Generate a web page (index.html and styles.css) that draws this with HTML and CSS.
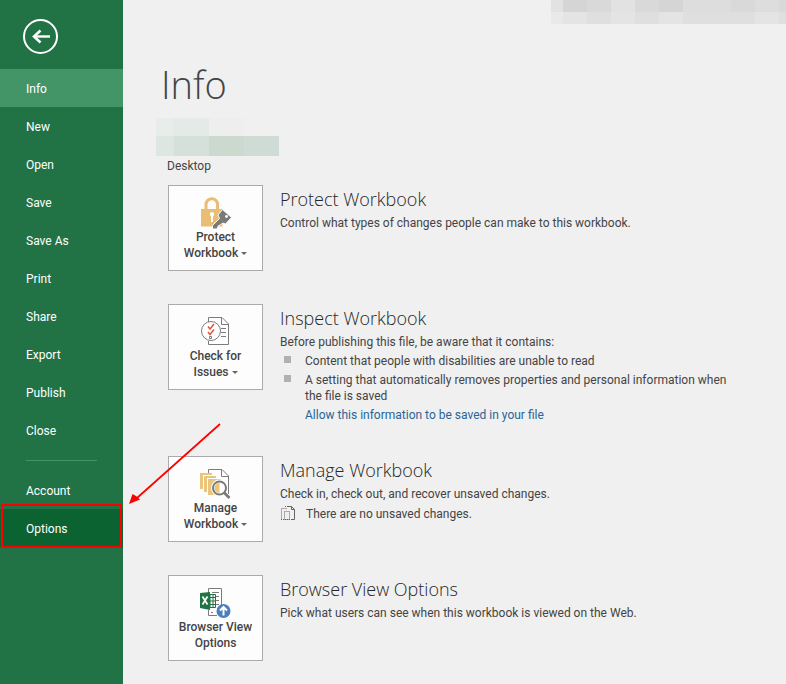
FILE: index.html
```
<!DOCTYPE html>
<html lang="en">
<head>
	<meta charset="utf-8" />
	<title>Info</title>
	<link rel="stylesheet" href="styles.css">
</head>
<body>
<div class="backstage">
	<nav class="sidebar">
		<button class="back" type="button" aria-label="Back">
			<svg width="36" height="36" viewBox="0 0 36 36" fill="none" stroke="#fff">
				<circle cx="18.500" cy="18.500" r="16.500" stroke-width="2" />
				<path d="M28 18.500H12" stroke-width="2.400" />
				<path d="M18.500 12.500L12 18.500L18.500 24.500" stroke-width="2.600" />
			</svg>
		</button>
		<a href="#" class="active">Info</a>
		<a href="#">New</a>
		<a href="#">Open</a>
		<a href="#">Save</a>
		<a href="#">Save As</a>
		<a href="#">Print</a>
		<a href="#">Share</a>
		<a href="#">Export</a>
		<a href="#">Publish</a>
		<a href="#">Close</a>
		<hr>
		<a href="#">Account</a>
		<a href="#" class="options">Options</a>
	</nav>
	<main class="main">
		<div class="topbar">
			<!-- hidden account name -->
			<svg width="235" height="24" shape-rendering="crispEdges">
				<path fill="#e2e2e2" d="M0 0h12v12H0z" />
				<path fill="#d5d5d5" d="M12 0h24v12H12zM108 0h24v12h-24z" />
				<path fill="#d9d9d9" d="M36 0h24v12H36zM84 0h24v12H84zM180 0h24v12h-24zM228 0h7v12h-7z" />
				<path fill="#e2e2e2" d="M60 0h24v12H60z" />
				<path fill="#dddddd" d="M132 0h48v12h-48zM204 0h24v12h-24z" />
				<path fill="#e9e9e9" d="M0 12h12v12H0z" />
				<path fill="#e4e4e4" d="M12 12h24v12H12zM60 12h24v12H60zM108 12h24v12h-24zM204 12h24v12h-24z" />
				<path fill="#dfdfdf" d="M36 12h24v12H36zM84 12h24v12H84zM132 12h72v12h-72zM228 12h7v12h-7z" />
			</svg>
		</div>
		<h1>Info</h1>
		<!-- hidden file name -->
		<svg class="filename" width="123" height="38" shape-rendering="crispEdges">
			<path fill="#e8ecea" d="M0 0h18v18H0z" />
			<path fill="#e4eae8" d="M18 0h35v18H18z" />
			<path fill="#eeeeee" d="M53 0h35v18H53z" />
			<path fill="#dde6e1" d="M0 18h18v20H0z" />
			<path fill="#d5e0da" d="M18 18h35v20H18z" />
			<path fill="#cbd9cf" d="M53 18h35v20H53z" />
			<path fill="#cfdcd5" d="M88 18h35v20H88z" />
		</svg>
		<p class="folder">Desktop</p>

		<section class="row">
			<button class="tile" type="button">
				<svg width="32" height="32" viewBox="0 0 32 32">
					<path d="M6 13V7.500a5.800 5.800 0 0 1 11.600 0V13" fill="none" stroke="#e8bd74" stroke-width="3" />
					<path d="M1 12h21.500v17.500H1z" fill="#e8bd74" />
					<path d="M12 15a2.300 2.300 0 0 1 1 4.300V25h-2v-5.700A2.300 2.300 0 0 1 12 15z" fill="#fff" />
					<path d="M22.500 12.500L31.500 20.500L25.500 27L22.500 26L20.500 28L18.500 28.500L17 32H12.500V28.500L19.500 21.500L18 18z" fill="#7a7a7a" stroke="#fdfdfd" stroke-width="1" />
					<circle cx="26.500" cy="19.500" r="1.400" fill="#fff" />
				</svg>
				<span>Protect</span>
				<span>Workbook<i class="arrow"></i></span>
			</button>
			<div class="text">
				<h2>Protect Workbook</h2>
				<p>Control what types of changes people can make to this workbook.</p>
			</div>
		</section>

		<section class="row">
			<button class="tile" type="button">
				<svg width="32" height="32" viewBox="0 0 32 32" fill="none" stroke="#7c7c7c">
					<path d="M8.500 6V1.500H22L28.500 8v20.500h-20V25" fill="#fff" />
					<path d="M21.500 1.500V8.500H28.500M21 12.500h5M21 16.500h5M21 20.500h5" />
					<circle cx="11" cy="15" r="9.500" fill="#fff" />
					<path d="M8 10.500l2 2.500 4-5M8 16l2 2.500 4-5" stroke="#dc5a38" stroke-width="1.500" />
					<path d="M9.500 20.500h2V22.500H9.500z" />
				</svg>
				<span>Check for</span>
				<span>Issues<i class="arrow"></i></span>
			</button>
			<div class="text">
				<h2>Inspect Workbook</h2>
				<p>Before publishing this file, be aware that it contains:</p>
				<ul>
					<li>Content that people with disabilities are unable to read</li>
					<li>A setting that automatically removes properties and personal information when the file is saved</li>
				</ul>
				<a href="#" class="allow">Allow this information to be saved in your file</a>
			</div>
		</section>

		<section class="row">
			<button class="tile" type="button">
				<svg width="32" height="32" viewBox="0 0 32 32" fill="none">
					<path d="M8.500 5V1.500H22L28.500 8v18" stroke="#7c7c7c" fill="#fff" />
					<path d="M21.500 1.500V8.500H28.500" stroke="#7c7c7c" />
					<path d="M0 5h12v2H3v14H0zM4 8h12v2H7v14H4zM8 11h13v16H8z" fill="#ebc47e" />
					<circle cx="19.500" cy="20" r="6.500" fill="#fff" stroke="#fff" stroke-width="4" />
					<path d="M19.500 15a5 5 0 0 0 0 10z" fill="#ebc47e" />
					<circle cx="19.500" cy="20" r="6.500" stroke="#7a7a7a" stroke-width="2" />
					<path d="M24 24.500L29.500 30" stroke="#7a7a7a" stroke-width="2.800" />
				</svg>
				<span>Manage</span>
				<span>Workbook<i class="arrow"></i></span>
			</button>
			<div class="text">
				<h2>Manage Workbook</h2>
				<p>Check in, check out, and recover unsaved changes.</p>
				<p class="versions">
					<svg width="16" height="16" viewBox="0 0 16 16" fill="none" stroke="#666">
						<path d="M1.500 13.500V2.500H7M4.500 13.500V5.500H9.500V13.500z" stroke-dasharray="1 1" />
						<path d="M5 .5H11M1 13.500H11" stroke-dasharray="1 1" />
						<path d="M8 .5H11.500L14.500 3.500V13.500H11M11.500 .5V3.500H14.500" />
					</svg>
					There are no unsaved changes.
				</p>
			</div>
		</section>

		<section class="row">
			<button class="tile" type="button">
				<svg width="32" height="32" viewBox="0 0 32 32" fill="none">
					<path d="M8.500 7V1.500h13V28M8.500 23v5.500H17" stroke="#7c7c7c" fill="#fff" />
					<path d="M12 5.500h7M16 9.500h3M16 13.500h3M16 17.500h3M11 25.500h2" stroke="#7c7c7c" />
					<path d="M10 7.500h5.500v13H10z" fill="#fff" stroke="#217346" />
					<path d="M10 10.500h5M10 14h5M10 17.500h5M13 7v13" stroke="#217346" />
					<path d="M0 6l10-1v18L0 21z" fill="#217346" />
					<path d="M2.500 9.500l5 8M7.500 9.500l-5 8" stroke="#fff" stroke-width="1.700" />
					<circle cx="23.500" cy="24" r="7" fill="#4a80bd" />
					<path d="M23.500 28.500V20M20 23.500L23.500 20l3.500 3.500" stroke="#fff" stroke-width="2" />
				</svg>
				<span>Browser View</span>
				<span>Options</span>
			</button>
			<div class="text">
				<h2>Browser View Options</h2>
				<p>Pick what users can see when this workbook is viewed on the Web.</p>
			</div>
		</section>
	</main>

	<!-- callout pointing at Options -->
	<div class="mark"></div>
	<svg class="pointer" width="94" height="84" viewBox="0 0 94 84">
		<path d="M91 1L8 75" stroke="#f00" stroke-width="1.700" />
		<path d="M0 81L3.500 71L7 73L11 76.500z" fill="#f00" />
	</svg>
</div>
</body>
</html>
```
FILE: styles.css
```
*{
margin:0;
padding:0;
box-sizing:border-box;
}
body{
background:#f0f0f0;
color:#444;
font:12px/16px Roboto,"Open Sans",sans-serif;
}
.backstage{
display:flex;
min-height:100vh;
position:relative;
}
.sidebar{
flex:none;
width:123px;
background:#217346;
}
.back{
display:block;
width:36px;
height:36px;
margin:18px 0 15px 22px;
border:0;
background:none;
}
.sidebar a{
display:block;
height:38px;
padding:12px 0 0 26px;
color:#fff;
text-decoration:none;
}
.sidebar a.active{
background:#439467;
}
.sidebar a.options{
background:#0b6332;
}
.sidebar hr{
height:1px;
margin:11px 26px 10px;
border:0;
background:#439467;
}
.main{
flex:1;
padding:0 0 23px 33px;
}
.topbar{
display:flex;
justify-content:flex-end;
height:24px;
}
h1{
margin:32px 0 6px 5px;
font:300 38px/56px "Open Sans",sans-serif;
}
.filename{
display:block;
}
.folder{
margin:2px 0 11px 11px;
}
.row{
display:flex;
align-items:flex-start;
gap:17px;
margin:0 56px 33px 12px;
}
.row:last-child{
margin-bottom:0;
}
.tile{
flex:none;
display:flex;
flex-direction:column;
align-items:center;
width:95px;
height:86px;
padding-top:11px;
border:1px solid #ababab;
background:#fdfdfd;
color:#444;
font:500 12px/16px Roboto,"Open Sans",sans-serif;
white-space:nowrap;
}
.arrow{
display:inline-block;
margin-left:3px;
border:3px solid transparent;
border-top-color:#666;
border-bottom:0;
vertical-align:middle;
}
h2{
margin-bottom:2px;
font:300 18px/28px "Open Sans",sans-serif;
color:#262626;
}
li{
position:relative;
margin-top:3px;
padding-left:25px;
list-style:none;
}
li:before{
content:"";
position:absolute;
left:4px;
top:3px;
width:7px;
height:7px;
background:#b1b1b1;
}
.allow{
display:block;
margin:3px 0 0 25px;
color:#2a6496;
text-decoration:none;
}
.versions{
display:flex;
gap:10px;
margin-top:4px;
}
.mark{
position:absolute;
left:1px;
top:504px;
width:121px;
height:44px;
border:2px solid #f00;
}
.pointer{
position:absolute;
left:129px;
top:423px;
}
```
